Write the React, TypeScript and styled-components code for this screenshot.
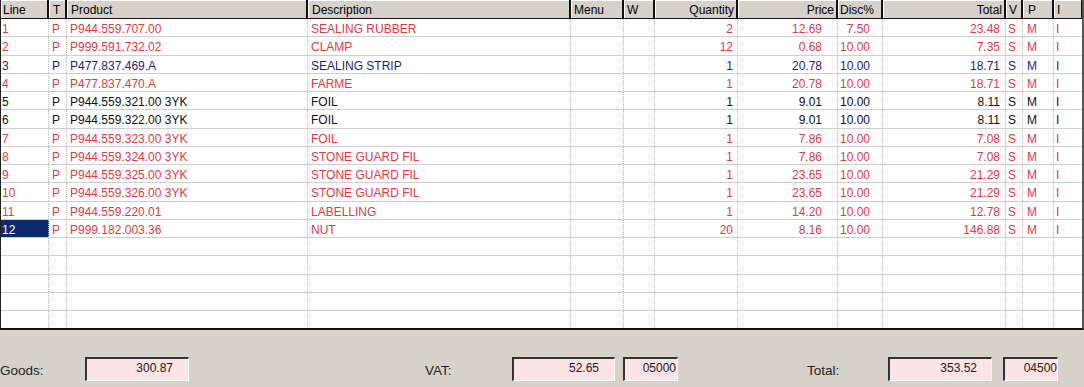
import React from 'react'
import styled, { createGlobalStyle } from 'styled-components'

const GlobalStyle = createGlobalStyle`
  html, body {
    margin: 0;
    padding: 0;
    background: #d6d2ca;
  }
  body {
    font-family: "Liberation Sans", Arial, sans-serif;
    font-size: 12px;
  }
`

type Align = 'left' | 'right'

interface Column {
  key: string
  title: string
  width: number
  align: Align
  headAlign: Align
  padRight: number
  padLeft: number
}

const columns: Column[] = [
  { key: 'line', title: 'Line', width: 48, align: 'left', headAlign: 'left', padLeft: 1, padRight: 0 },
  { key: 't', title: 'T', width: 18, align: 'left', headAlign: 'left', padLeft: 3, padRight: 0 },
  { key: 'product', title: 'Product', width: 241, align: 'left', headAlign: 'left', padLeft: 3, padRight: 0 },
  { key: 'desc', title: 'Description', width: 263, align: 'left', headAlign: 'left', padLeft: 3, padRight: 0 },
  { key: 'menu', title: 'Menu', width: 53, align: 'left', headAlign: 'left', padLeft: 2, padRight: 0 },
  { key: 'w', title: 'W', width: 31, align: 'left', headAlign: 'left', padLeft: 2, padRight: 0 },
  { key: 'qty', title: 'Quantity', width: 83, align: 'right', headAlign: 'right', padLeft: 0, padRight: 4 },
  { key: 'price', title: 'Price', width: 100, align: 'right', headAlign: 'right', padLeft: 0, padRight: 15 },
  { key: 'disc', title: 'Disc%', width: 45, align: 'right', headAlign: 'left', padLeft: 1, padRight: 12 },
  { key: 'total', title: 'Total', width: 123, align: 'right', headAlign: 'right', padLeft: 0, padRight: 5 },
  { key: 'v', title: 'V', width: 17, align: 'left', headAlign: 'left', padLeft: 2, padRight: 0 },
  { key: 'p', title: 'P', width: 31, align: 'left', headAlign: 'left', padLeft: 4, padRight: 0 },
  { key: 'i', title: 'I', width: 29, align: 'left', headAlign: 'left', padLeft: 2, padRight: 0 },
]

const gridCols = columns.map((c) => `${c.width}px`).join(' ')

type Tone = 'red' | 'blue' | 'black'

const toneColor: Record<Tone, string> = {
  red: '#e23a44',
  blue: '#1c1c84',
  black: '#101010',
}

const rows: { tone: Tone; cells: string[] }[] = [
  { tone: 'red', cells: ['1', 'P', 'P944.559.707.00', 'SEALING RUBBER', '', '', '2', '12.69', '7.50', '23.48', 'S', 'M', 'I'] },
  { tone: 'red', cells: ['2', 'P', 'P999.591.732.02', 'CLAMP', '', '', '12', '0.68', '10.00', '7.35', 'S', 'M', 'I'] },
  { tone: 'blue', cells: ['3', 'P', 'P477.837.469.A', 'SEALING STRIP', '', '', '1', '20.78', '10.00', '18.71', 'S', 'M', 'I'] },
  { tone: 'red', cells: ['4', 'P', 'P477.837.470.A', 'FARME', '', '', '1', '20.78', '10.00', '18.71', 'S', 'M', 'I'] },
  { tone: 'black', cells: ['5', 'P', 'P944.559.321.00 3YK', 'FOIL', '', '', '1', '9.01', '10.00', '8.11', 'S', 'M', 'I'] },
  { tone: 'black', cells: ['6', 'P', 'P944.559.322.00 3YK', 'FOIL', '', '', '1', '9.01', '10.00', '8.11', 'S', 'M', 'I'] },
  { tone: 'red', cells: ['7', 'P', 'P944.559.323.00 3YK', 'FOIL', '', '', '1', '7.86', '10.00', '7.08', 'S', 'M', 'I'] },
  { tone: 'red', cells: ['8', 'P', 'P944.559.324.00 3YK', 'STONE GUARD FIL', '', '', '1', '7.86', '10.00', '7.08', 'S', 'M', 'I'] },
  { tone: 'red', cells: ['9', 'P', 'P944.559.325.00 3YK', 'STONE GUARD FIL', '', '', '1', '23.65', '10.00', '21.29', 'S', 'M', 'I'] },
  { tone: 'red', cells: ['10', 'P', 'P944.559.326.00 3YK', 'STONE GUARD FIL', '', '', '1', '23.65', '10.00', '21.29', 'S', 'M', 'I'] },
  { tone: 'red', cells: ['11', 'P', 'P944.559.220.01', 'LABELLING', '', '', '1', '14.20', '10.00', '12.78', 'S', 'M', 'I'] },
  { tone: 'red', cells: ['12', 'P', 'P999.182.003.36', 'NUT', '', '', '20', '8.16', '10.00', '146.88', 'S', 'M', 'I'] },
]

const EMPTY_ROWS = 5

const Window = styled.div`
  width: 1084px;
  height: 387px;
  background: #d6d2ca;
  display: flex;
  flex-direction: column;
  overflow: hidden;
`

const Grid = styled.div`
  height: 330px;
  flex: none;
  box-sizing: border-box;
  background: #fff;
  border-left: 1px solid #202020;
  border-right: 2px solid #555;
  border-bottom: 2px solid #111;
  display: flex;
  flex-direction: column;
  overflow: hidden;
`

const HeaderRow = styled.div`
  display: grid;
  grid-template-columns: ${gridCols};
  height: 19px;
  flex: none;
  box-sizing: border-box;
  border-bottom: 1px solid #111;
  background: #d6d2ca;
`

const HeadCell = styled.div<{ $align: Align; $pl: number; $pr: number }>`
  box-sizing: border-box;
  height: 18px;
  line-height: 20px;
  color: #000;
  text-align: ${(p) => p.$align};
  padding-left: ${(p) => p.$pl}px;
  padding-right: ${(p) => p.$pr}px;
  border-right: 2px solid #111;
  box-shadow: inset 1px 1px 0 #fff;
  white-space: nowrap;
  overflow: hidden;
`

const Row = styled.div`
  display: grid;
  grid-template-columns: ${gridCols};
  height: 18.25px;
  flex: none;
  box-sizing: border-box;
  border-bottom: 1px solid #cfcfcf;
`

const Cell = styled.div<{ $align: Align; $pl: number; $pr: number; $color: string; $selected?: boolean }>`
  box-sizing: border-box;
  padding-top: 2px;
  line-height: 16px;
  text-align: ${(p) => p.$align};
  padding-left: ${(p) => p.$pl}px;
  padding-right: ${(p) => p.$pr}px;
  color: ${(p) => (p.$selected ? '#fff' : p.$color)};
  background: ${(p) => (p.$selected ? '#0c2a6c' : 'transparent')};
  border-right: 1px dotted #bdbdbd;
  white-space: nowrap;
  overflow: hidden;
`

const Footer = styled.div`
  flex: 1;
  display: grid;
  grid-template-columns: 85px 104px 236px 87px 103px 8px 55px 129px 81px 104px 11px 55px;
  align-items: start;
  padding-top: 27px;
  box-sizing: border-box;
`

const Label = styled.div`
  color: #222;
  font-size: 13.5px;
  line-height: 16px;
  padding-top: 6px;
`

const ValueBox = styled.div<{ $pr: number }>`
  height: 24px;
  box-sizing: border-box;
  background: #fbe3e6;
  border-top: 2px solid #333;
  border-left: 2px solid #333;
  border-right: 1px solid #fff;
  border-bottom: 1px solid #fff;
  text-align: right;
  padding-right: ${(p) => p.$pr}px;
  line-height: 19px;
  color: #202020;
`

export default function App() {
  return (
    <Window>
      <GlobalStyle />
      <Grid>
        <HeaderRow>
          {columns.map((c) => (
            <HeadCell key={c.key} $align={c.headAlign} $pl={c.headAlign === 'left' ? c.padLeft + 1 : 0} $pr={c.headAlign === 'right' ? 2 : 0}>
              {c.title}
            </HeadCell>
          ))}
        </HeaderRow>
        {rows.map((r, i) => (
          <Row key={i}>
            {columns.map((c, j) => (
              <Cell
                key={c.key}
                $align={c.align}
                $pl={c.padLeft}
                $pr={c.padRight}
                $color={toneColor[r.tone]}
                $selected={i === rows.length - 1 && j === 0}
              >
                {r.cells[j]}
              </Cell>
            ))}
          </Row>
        ))}
        {Array.from({ length: EMPTY_ROWS }).map((_, i) => (
          <Row key={`e${i}`}>
            {columns.map((c) => (
              <Cell key={c.key} $align={c.align} $pl={0} $pr={0} $color="#000" />
            ))}
          </Row>
        ))}
      </Grid>
      <Footer>
        <Label>Goods:</Label>
        <ValueBox $pr={15}>300.87</ValueBox>
        <span />
        <Label>VAT:</Label>
        <ValueBox $pr={15}>52.65</ValueBox>
        <span />
        <ValueBox $pr={1}>05000</ValueBox>
        <span />
        <Label>Total:</Label>
        <ValueBox $pr={14}>353.52</ValueBox>
        <span />
        <ValueBox $pr={0}>04500</ValueBox>
      </Footer>
    </Window>
  )
}
